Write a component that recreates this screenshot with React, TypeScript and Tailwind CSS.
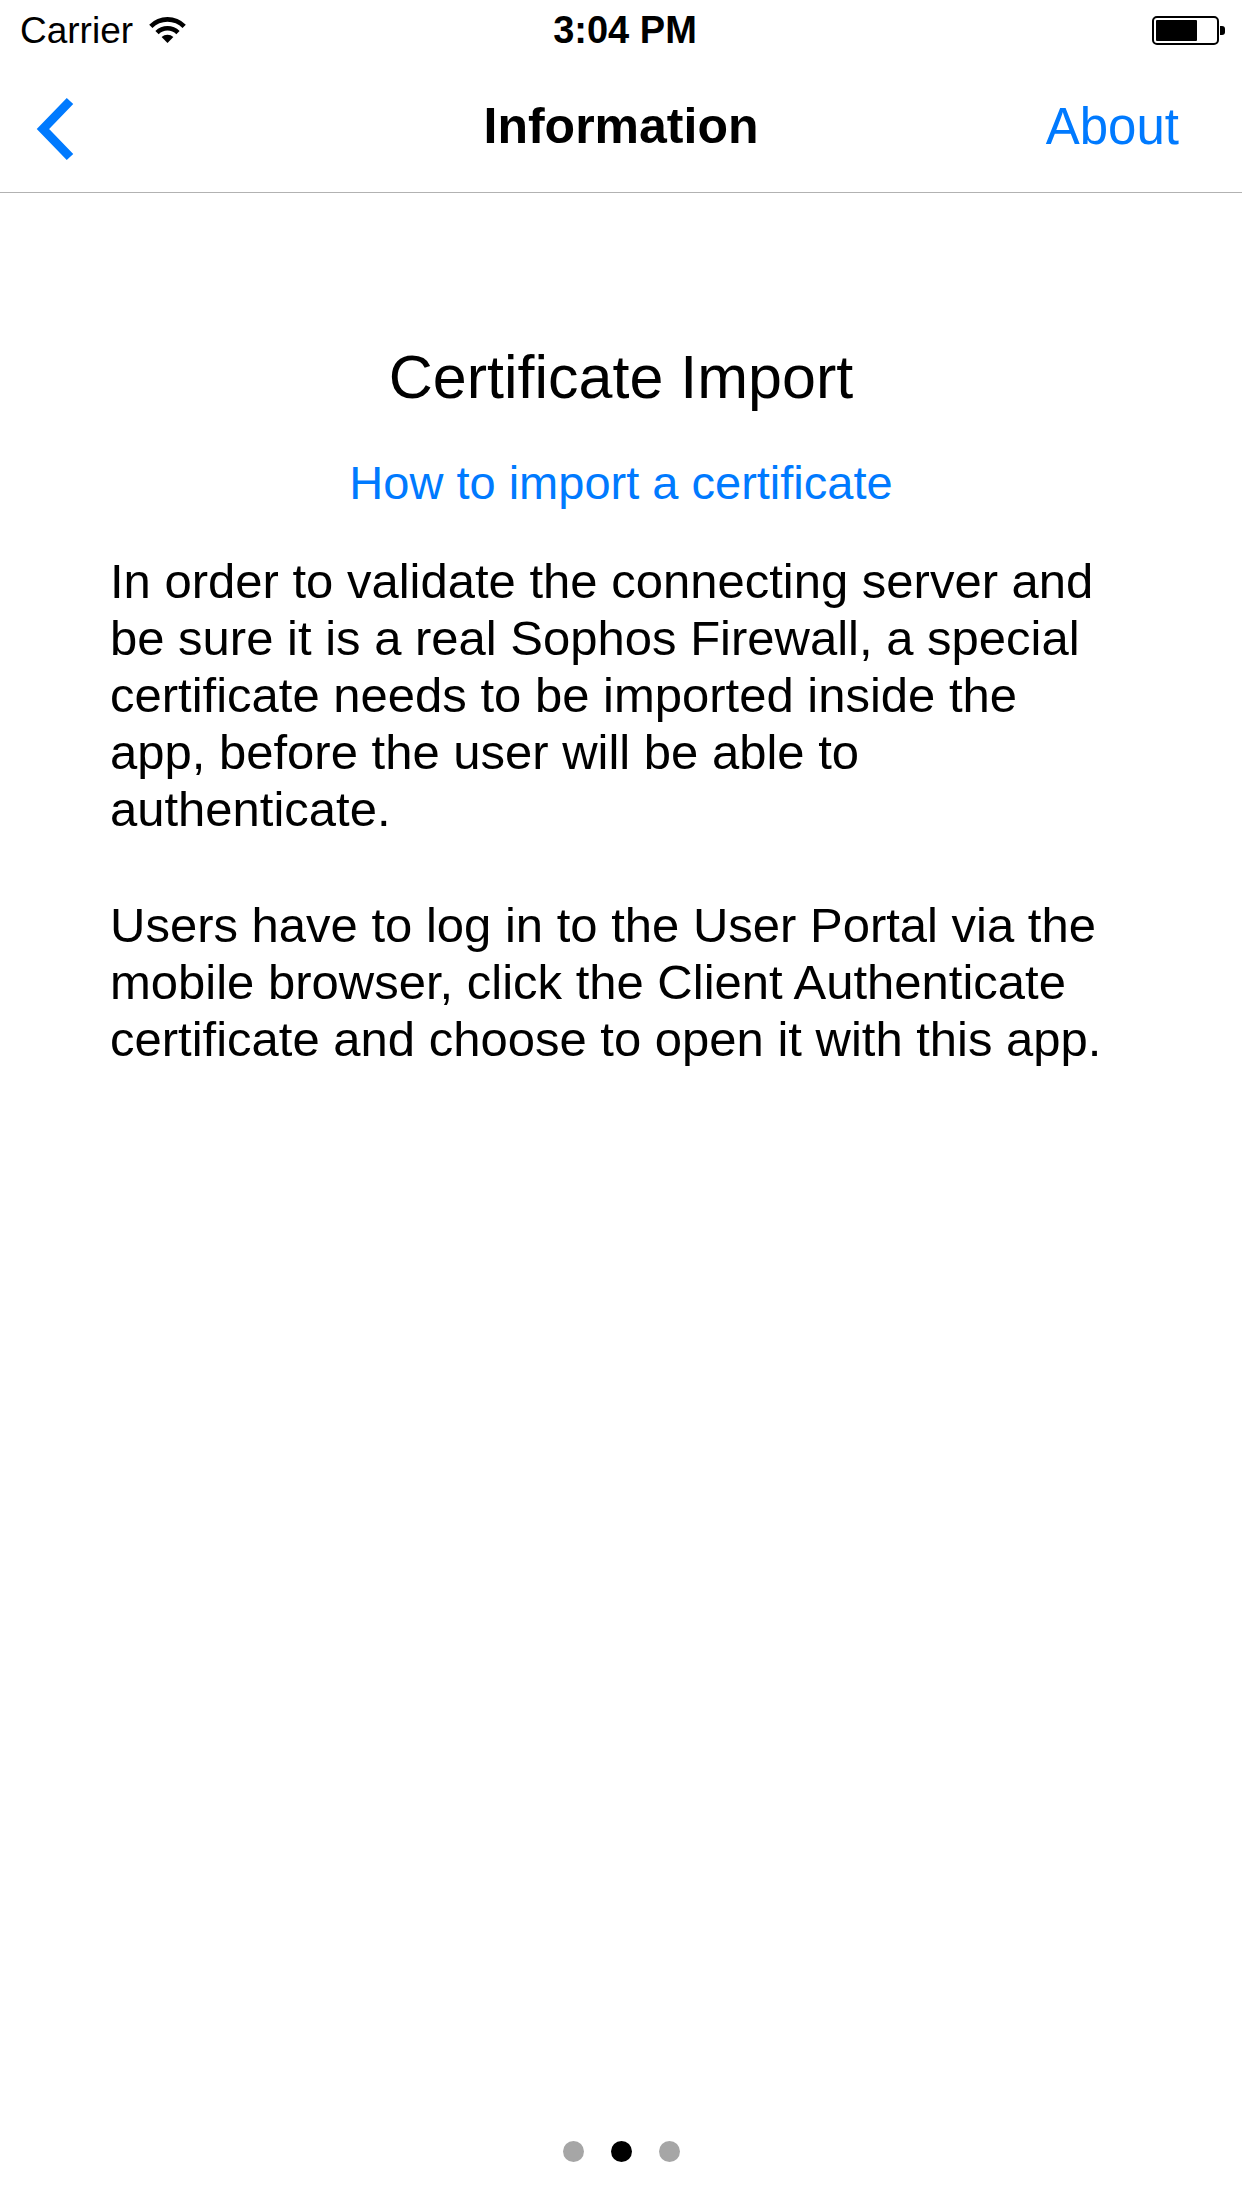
import React from 'react';

const BLUE = 'text-[#007aff]';

function WifiIcon() {
  return (
    <svg width="37" height="27" viewBox="0 -1 40 29" className="ml-[16px]">
      <path d="M20 27 L13.64 20.64 A9 9 0 0 1 26.36 20.64 Z" fill="black" />
      <path d="M6.92 13.92 A18.5 18.5 0 0 1 33.08 13.92 L29.55 17.45 A13.5 13.5 0 0 0 10.45 17.45 Z" fill="black" />
      <path d="M0.2 7.2 A28 28 0 0 1 39.8 7.2 L36.26 10.74 A23 23 0 0 0 3.74 10.74 Z" fill="black" />
    </svg>
  );
}

function Battery() {
  return (
    <div className="flex items-center">
      <div className="w-[67px] h-[29px] border-[2px] border-black rounded-[5px] p-[2px]">
        <div className="w-[41px] h-full bg-black rounded-[1px]" />
      </div>
      <div className="w-[5px] h-[9px] bg-black rounded-r-[3px] ml-[1px]" />
    </div>
  );
}

function StatusBar() {
  return (
    <div className="h-[60px] flex items-center">
      <div className="flex-1 flex items-center">
        <span className="ml-[20px] text-[37px] leading-none text-black">Carrier</span>
        <WifiIcon />
      </div>
      <span className="text-[38px] leading-none font-semibold text-black ml-[8px]">3:04 PM</span>
      <div className="flex-1 flex justify-end">
        <div className="mr-[17px]">
          <Battery />
        </div>
      </div>
    </div>
  );
}

function NavBar() {
  return (
    <div className="h-[133px] border-b border-[#b2b2b2] flex items-center">
      <div className="flex-1 flex items-center">
        {/* back chevron */}
        <svg width="50" height="74" viewBox="0 0 50 74" className="ml-[30px] mt-[5px]">
          <path
            d="M40 9 L13 37 L40 65"
            fill="none"
            stroke="#007aff"
            strokeWidth="9"
            strokeLinecap="butt"
            strokeLinejoin="miter"
          />
        </svg>
      </div>
      <span className="text-[50px] font-bold text-black leading-none">Information</span>
      <div className="flex-1 flex justify-end">
        <span className={`mr-[63px] text-[51px] leading-none ${BLUE}`}>About</span>
      </div>
    </div>
  );
}

export default function App() {
  return (
    <div className="w-[1242px] h-[2208px] bg-white flex flex-col font-['Liberation_Sans',Arial,sans-serif]">
      <StatusBar />
      <NavBar />

      {/* page content */}
      <div className="flex-1 flex flex-col items-center pt-[148px]">
        <h1 className="text-[61px] leading-[72px] text-black">Certificate Import</h1>
        <a className={`mt-[42px] text-[47px] leading-[56px] ${BLUE}`}>How to import a certificate</a>
        <div className="mt-[42px] w-full px-[110px] text-[49px] leading-[57px] text-black">
          <p>
            In order to validate the connecting server and
            <br />
            be sure it is a real Sophos Firewall, a special
            <br />
            certificate needs to be imported inside the
            <br />
            app, before the user will be able to
            <br />
            authenticate.
          </p>
          <p className="mt-[59px]">
            Users have to log in to the User Portal via the
            <br />
            mobile browser, click the Client Authenticate
            <br />
            certificate and choose to open it with this app.
          </p>
        </div>
      </div>

      {/* page control */}
      <div className="flex justify-center gap-[27px] mb-[46px]">
        <div className="w-[21px] h-[21px] rounded-full bg-[#a6a6a6]" />
        <div className="w-[21px] h-[21px] rounded-full bg-black" />
        <div className="w-[21px] h-[21px] rounded-full bg-[#a6a6a6]" />
      </div>
    </div>
  );
}
